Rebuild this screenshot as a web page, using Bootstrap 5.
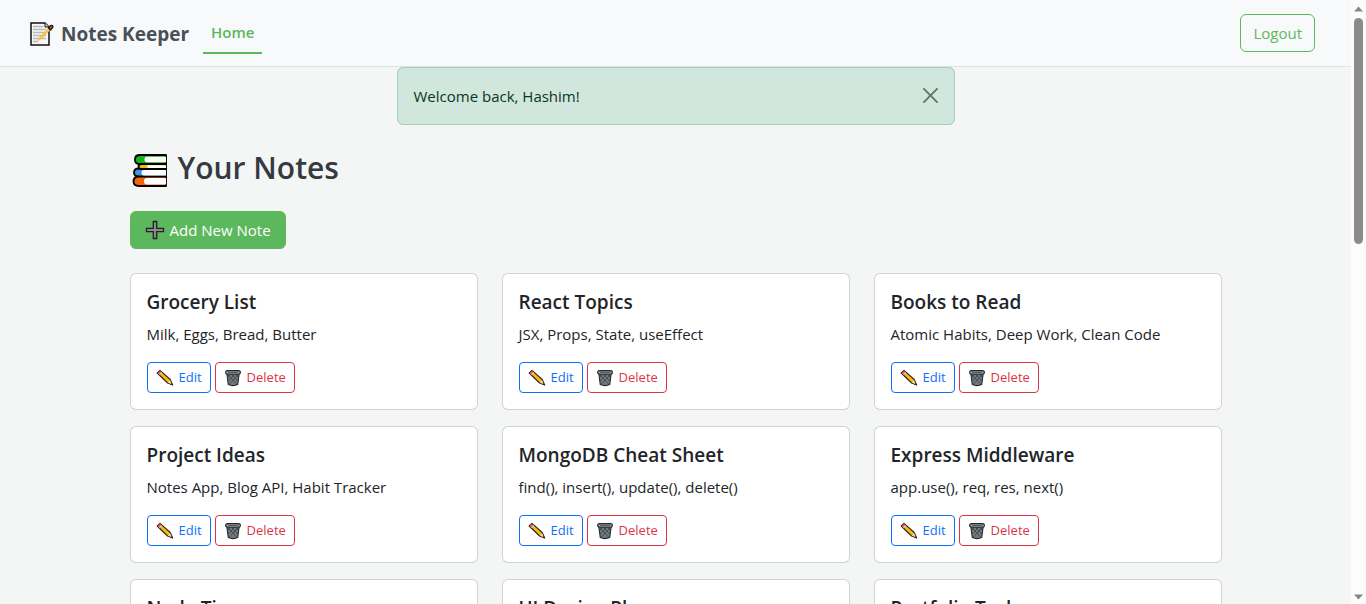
<!DOCTYPE html>
<html lang="en">
<head>
<meta charset="utf-8">
<meta name="viewport" content="width=device-width, initial-scale=1">
<title>Notes Keeper</title>
<link href="https://cdn.jsdelivr.net/npm/bootstrap@5.3.0/dist/css/bootstrap.min.css" rel="stylesheet">
<style>
  :root { --leaf: #5cb85c; }
  body { font-family: "Open Sans", "Noto Sans", sans-serif; font-size: 15px; line-height: 24px; background: #f4f6f5; }
  .page-view { min-width: 0; }
  .topbar { background: #f8f9fb; border-color: #dee2e9 !important; padding: 12px 36px 12px 30px; }
  .topbar .navbar-brand { font-size: 19px; line-height: 30px; font-weight: 700; color: #495057; padding: 6px 0 4px; margin-right: 14px; gap: 7px; }
  .topbar .nav-link.active { color: var(--leaf); font-weight: 600; padding: 8px; border-bottom: 2px solid var(--leaf); }
  .btn { font-size: 15px; line-height: 24px; }
  .btn-sm { font-size: 13px; line-height: 21px; gap: 5px; }
  .btn-leaf { --bs-btn-padding-x: 14px; --bs-btn-color: #fff; --bs-btn-bg: var(--leaf); --bs-btn-border-color: var(--leaf); --bs-btn-hover-color: #fff; --bs-btn-hover-bg: #4cae4c; gap: 5px; }
  .btn-outline-leaf { --bs-btn-color: var(--leaf); --bs-btn-border-color: var(--leaf); --bs-btn-hover-color: #fff; --bs-btn-hover-bg: var(--leaf); }
  .page-title { font-size: 30px; line-height: 38px; font-weight: 600; color: #343a40; }
  .card-title { font-size: 19px; line-height: 24px; font-weight: 600; }
  .alert { color: #0a3622; background: #d1e7dd; border-color: #a3cfbb; }
  .scroll-rail { width: 15px; background: #fcfcfc; padding: 6px 0 4px; }
  .scroll-thumb { width: 9px; height: 38%; background: #8b8b8b; border-radius: 5px; margin-top: 6px; }
</style>
</head>
<body class="d-flex vh-100 overflow-hidden">
<svg class="d-none" aria-hidden="true">
  <symbol id="i-pencil" viewBox="0 0 18 18">
    <path d="M1.200 4 4 1.400 14.200 10.500 16.700 16 11.600 14Z" fill="#fdb811" stroke="#2b2418" stroke-width="1.100" stroke-linejoin="round"/>
    <path d="M1.600 4 4 1.800 5.800 3.400 3.400 5.800Z" fill="#e3566b"/>
    <path d="m5.700 3.400-2.300 2.300" stroke="#ccc" stroke-width="1.200"/>
    <path d="m11.800 13.600 2.200-2.400 2 4.200Z" fill="#f3d2a2"/>
    <path d="m14.400 15.200 1.200-1.200 1.200 2.200Z" fill="#222"/>
  </symbol>
  <symbol id="i-bin" viewBox="0 0 18 18">
    <path d="M2.800 4.500 4.300 15.600q4.700 2 9.400 0L15.200 4.500Z" fill="#737b80" stroke="#24282a" stroke-width="1.100"/>
    <path d="m4 6 8.500 9M8 6l5.800 6M12 6l2.500 2.500M14 6l-8.500 9M10 6l-5.800 6M6 6 3.500 8.500" stroke="#3b4145" stroke-width=".8"/>
    <rect x="1.600" y="1.600" width="14.800" height="3.600" rx="1.700" fill="#929a9e" stroke="#24282a" stroke-width="1.100"/>
    <path d="M4 3.400h10" stroke="#50575b"/>
  </symbol>
</svg>

<div class="page-view flex-grow-1 overflow-hidden">
  <nav class="topbar navbar navbar-expand border-bottom">
    <a class="navbar-brand d-flex align-items-center" href="#">
      <svg width="24" height="24" viewBox="0 0 24 24" aria-hidden="true">
        <path d="M1 1h14l4 4v18H1Z" fill="#f7f7f7" stroke="#111" stroke-width="1.500"/>
        <path d="M15 1v4h4" fill="#ddd" stroke="#111"/>
        <path d="M3 4.500h10M3 7.500h13M3 10.500h13M3 13.500h13M3 16.500h13M3 19.500h5" stroke="#b9b9b9" stroke-width="1.300"/>
        <path d="m7 19 1.500-3L19 5.500l2 2L10 18Z" fill="#fcc23c"/>
        <path d="m18.500 6 2.200-2.400q2-.8 2.300 1.500L20.600 8Z" fill="#c8504e" stroke="#111" stroke-width="1.200"/>
      </svg>
      <span>Notes Keeper</span>
    </a>
    <ul class="navbar-nav me-auto">
      <li class="nav-item"><a class="nav-link active" aria-current="page" href="#">Home</a></li>
    </ul>
    <button type="button" class="btn btn-outline-leaf">Logout</button>
  </nav>

  <div class="container">
    <div class="alert alert-dismissible w-50 mx-auto mb-4" role="alert">
      Welcome back, Hashim!
      <button type="button" class="btn-close" data-bs-dismiss="alert" aria-label="Close"></button>
    </div>
  </div>

  <main class="container px-4">
    <h2 class="page-title d-flex align-items-center gap-2 mb-4">
      <svg width="40" height="38" viewBox="0 -1 40 38" aria-hidden="true">
        <g stroke="#000" stroke-width="1.800" stroke-linejoin="round">
          <path d="M36 5H10q-5 0-5 4.500T9 14h27Z" fill="#17b517"/>
          <path d="M8 26.500q-4-.5-4-4t4-4h28v9H8Z" fill="#3f94dc"/>
          <path d="M36 14H11.500q-3 0-3 2.500t3 2.500H36Z" fill="#ffb900"/>
          <path d="M36 26.500H9q-5.500 0-5.500 4.700T9 36h27Z" fill="#f7630c"/>
        </g>
        <path d="M36 6.800H17q-2.500 0-2.500 2.700t2.500 2.700h19ZM36 15.200H19q-2 0-2 1.400t2 1.400h17ZM36 20H14q-2.500 0-2.500 2.700t2.500 2.700h22ZM36 28H17q-3 0-3 3.200t3 3.200h19Z" fill="#fff"/>
      </svg>
      <span>Your Notes</span>
    </h2>
    <button type="button" class="btn btn-leaf d-inline-flex align-items-center mb-4">
      <svg width="20" height="20" viewBox="0 0 20 20" aria-hidden="true"><path d="M8.300 1.500h3.400v6.800h6.800v3.400h-6.800v6.800H8.300v-6.800H1.500V8.300h6.800Z" fill="#8b8b8b" stroke="#222" stroke-width="1.300"/></svg>
      Add New Note
    </button>
    <div class="row" id="notes"></div>
  </main>
</div>

<div class="scroll-rail d-flex flex-column align-items-center flex-shrink-0" aria-hidden="true">
  <svg width="9" height="6" viewBox="0 0 9 6"><path d="M0 5.500 4.500.5 9 5.500Z" fill="#868686"/></svg>
  <div class="scroll-thumb"></div>
  <svg class="mt-auto" width="9" height="6" viewBox="0 0 9 6"><path d="M0 .5 4.500 5.500 9 .5Z" fill="#868686"/></svg>
</div>

<template id="note-card">
  <div class="col-4 mb-3">
    <div class="card">
      <div class="card-body">
        <h5 class="card-title"></h5>
        <p class="card-text mb-3"></p>
        <div class="d-flex gap-1">
          <a href="#" class="btn btn-sm btn-outline-primary d-flex align-items-center"><svg width="18" height="18" aria-hidden="true"><use href="#i-pencil"/></svg>Edit</a>
          <button type="button" class="btn btn-sm btn-outline-danger d-flex align-items-center"><svg width="18" height="18" aria-hidden="true"><use href="#i-bin"/></svg>Delete</button>
        </div>
      </div>
    </div>
  </div>
</template>
<script src="https://cdn.jsdelivr.net/npm/bootstrap@5.3.0/dist/js/bootstrap.bundle.min.js"></script>
<script>
  const notes = [
    ["Grocery List", "Milk, Eggs, Bread, Butter"],
    ["React Topics", "JSX, Props, State, useEffect"],
    ["Books to Read", "Atomic Habits, Deep Work, Clean Code"],
    ["Project Ideas", "Notes App, Blog API, Habit Tracker"],
    ["MongoDB Cheat Sheet", "find(), insert(), update(), delete()"],
    ["Express Middleware", "app.use(), req, res, next()"],
    ["Node Tips", "Modules, Events, Streams"],
    ["UI Design Plan", "Colors, Fonts, Layout"],
    ["Portfolio Tasks", "About, Projects, Contact"]
  ];
  const list = document.getElementById("notes");
  const template = document.getElementById("note-card");
  for (const [title, text] of notes) {
    const item = template.content.cloneNode(true);
    item.querySelector(".card-title").textContent = title;
    item.querySelector(".card-text").textContent = text;
    list.append(item);
  }
</script>
</body>
</html>
